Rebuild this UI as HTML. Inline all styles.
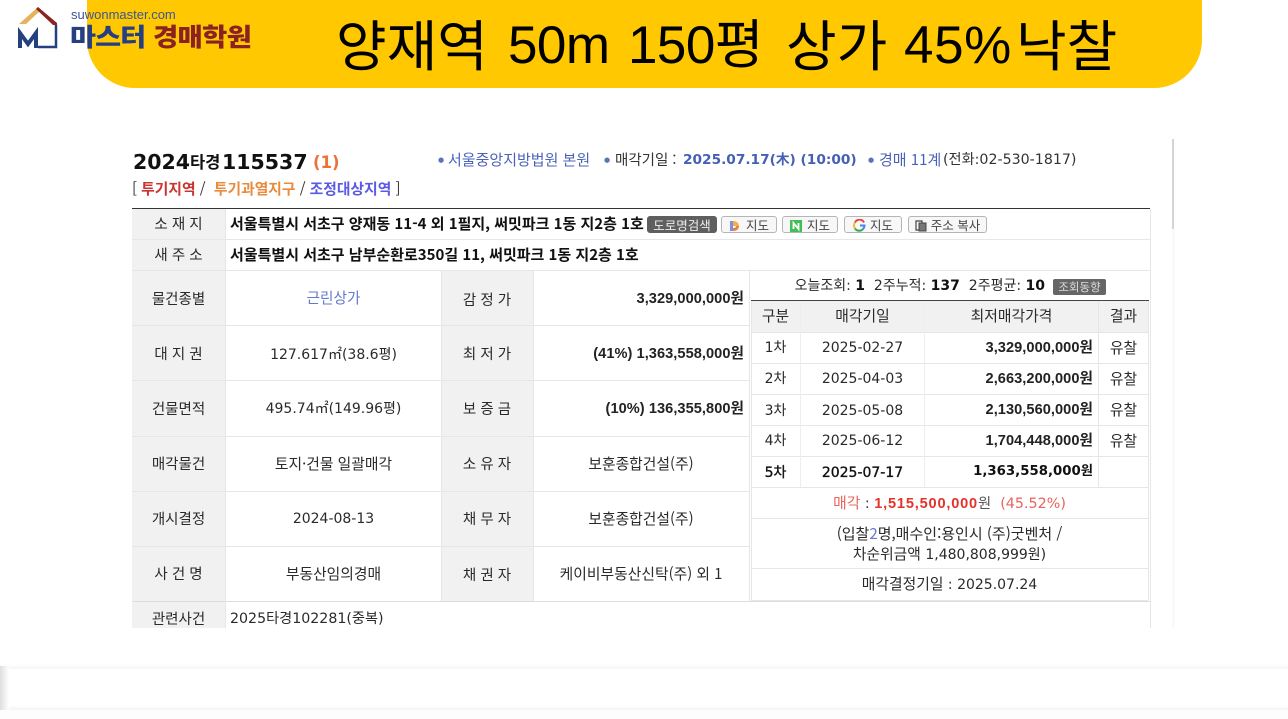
<!DOCTYPE html>
<html lang="ko"><head><meta charset="utf-8"><title>양재역 50m 150평 상가 45%낙찰</title>
<style>
html,body{margin:0;padding:0;background:#fff;width:1288px;height:719px;overflow:hidden}
body{position:relative;font-family:"DejaVu Sans","Noto Sans CJK KR",sans-serif;color:#222}
.a{position:absolute;white-space:nowrap}
.ti{position:absolute;white-space:nowrap;top:13px;font:53px/66px 'Liberation Sans','Noto Sans CJK KR',sans-serif;letter-spacing:-.55px;color:#000}
.tk{font-size:55px;letter-spacing:0}
.l{position:absolute;background:#e6e6e6}
.g{position:absolute;background:#f1f1f1}
.t{position:absolute;white-space:nowrap;font-size:14px;line-height:18px;text-align:center;color:#2a2a2a}
.k{font-family:"Noto Sans CJK KR",sans-serif;font-size:14.8px}
.h{font-family:"Noto Sans CJK KR",sans-serif;font-size:14.5px}
.r{text-align:right}
b{font-weight:700;color:#111}
.p{font:700 14.6px/18px "Liberation Sans","Noto Sans CJK KR",sans-serif;letter-spacing:.05px;color:#222}
.s{-webkit-text-stroke:.35px #111;color:#111}
.btn{position:absolute;top:216px;height:15px;border:1px solid #b5b5b5;border-radius:3px;background:#f7f7f7;box-sizing:content-box;font:12.5px/15px "Noto Sans CJK KR",sans-serif;color:#444;text-align:center;white-space:nowrap}
</style></head><body>
<div class="a" style="left:87px;top:-40px;width:1115px;height:128px;background:#ffc800;border-radius:0 0 48px 48px"></div>
<div class="ti tk" style="left:336px;top:14px">양재역</div>
<div class="ti" style="left:508px">50m</div>
<div class="ti" style="left:628px">150평</div>
<div class="ti tk" style="left:786px;top:14px">상가</div>
<div class="ti" style="left:904px;letter-spacing:.6px">45%</div>
<div class="ti tk" style="left:1016px;top:14px">낙찰</div>

<svg class="a" style="left:17px;top:6px" width="42" height="44" viewBox="0 0 42 44">
<path d="M2 18 21 1 24 4 9 18z" fill="#e8b15c"/><path d="M21 1 40 17V19H36L19 3z" fill="#8b2420"/>
<path d="M3 42V27L11 38 19 27V42" stroke="#24407f" stroke-width="4" fill="none"/><path d="M21 41H39V19" stroke="#24407f" stroke-width="2.500" fill="none"/>
</svg>
<div class="a" style="left:71px;top:7px;font:13px/16px 'Liberation Sans',sans-serif;color:#3c5596">suwonmaster.com</div>
<div class="a" style="left:70px;top:20px;font:800 25px/32px 'Noto Sans CJK KR',sans-serif;letter-spacing:-.8px;color:#253f82;transform:scaleX(1.13);transform-origin:left">마스터</div>
<div class="a" style="left:153px;top:20px;font:800 25px/32px 'Noto Sans CJK KR',sans-serif;letter-spacing:-.7px;color:#8a2222;transform:scaleX(1.1);transform-origin:left">경매학원</div>

<div style="position:absolute;left:0;top:0;width:1288px;height:719px;filter:blur(.25px)">
<div class="a" style="left:133px;top:150px;font:700 20.500px/25px 'DejaVu Sans','Noto Sans CJK KR',sans-serif;color:#111"><span style="position:absolute;left:0">2024</span><span style="position:absolute;left:57px;font-size:16.500px">타경</span><span style="position:absolute;left:89px">115537</span><span style="position:absolute;left:180px;font-size:16.500px;color:#e8743a">(1)</span></div>
<div class="a k" style="left:132px;top:179px;color:#333;line-height:20px">[ <b style="color:#c9342f">투기지역</b> / &nbsp;<b style="color:#e98a3c">투기과열지구</b> / <b style="color:#5a5ae6">조정대상지역</b> ]</div>
<div class="a" style="left:438px;top:150px;font-size:7px;line-height:20px;color:#5b74b8">●</div>
<div class="a k" style="left:448px;top:150px;line-height:20px;color:#4a63b8;font-size:15px">서울중앙지방법원 본원</div>
<div class="a" style="left:604px;top:150px;font-size:7px;line-height:20px;color:#5b74b8">●</div>
<div class="a k" style="left:615px;top:150px;line-height:20px;color:#333;font-size:14.500px">매각기일 :</div>
<div class="a" style="left:683px;top:150px;font:700 13.700px/20px 'DejaVu Sans','Noto Sans CJK KR',sans-serif;color:#4560b5">2025.07.17(木) (10:00)</div>
<div class="a" style="left:868px;top:150px;font-size:7px;line-height:20px;color:#5b74b8">●</div>
<div class="a k" style="left:879px;top:150px;line-height:20px;color:#4a63b8;font-size:15px">경매 11계</div>
<div class="a" style="left:943px;top:150px;font:14.200px/20px 'DejaVu Sans','Noto Sans CJK KR',sans-serif;color:#333">(전화:02-530-1817)</div>

<!-- backgrounds -->
<div class="g" style="left:132px;top:209px;width:93px;height:419px"></div>
<div class="g" style="left:441px;top:271px;width:92px;height:330px"></div>
<div class="g" style="left:751px;top:301px;width:397px;height:31px"></div>

<!-- main lines -->
<div class="l" style="left:132px;top:208px;width:1018px;height:1px;background:#333"></div>
<div class="l" style="left:132px;top:239px;width:1018px;height:1px"></div>
<div class="l" style="left:132px;top:270px;width:1018px;height:1px"></div>
<div class="l" style="left:132px;top:325px;width:617px;height:1px"></div>
<div class="l" style="left:132px;top:380px;width:617px;height:1px"></div>
<div class="l" style="left:132px;top:436px;width:617px;height:1px"></div>
<div class="l" style="left:132px;top:491px;width:617px;height:1px"></div>
<div class="l" style="left:132px;top:546px;width:617px;height:1px"></div>
<div class="l" style="left:132px;top:601px;width:1018px;height:1px;background:#ddd"></div>
<div class="l" style="left:225px;top:209px;width:1px;height:419px"></div>
<div class="l" style="left:441px;top:271px;width:1px;height:330px"></div>
<div class="l" style="left:533px;top:271px;width:1px;height:330px"></div>
<div class="l" style="left:749px;top:271px;width:1px;height:330px"></div>
<div class="l" style="left:1150px;top:209px;width:1px;height:419px"></div>

<!-- right table lines -->
<div class="l" style="left:751px;top:300px;width:398px;height:1px;background:#444"></div>
<div class="l" style="left:751px;top:332px;width:397px;height:1px"></div>
<div class="l" style="left:751px;top:363px;width:397px;height:1px"></div>
<div class="l" style="left:751px;top:394px;width:397px;height:1px"></div>
<div class="l" style="left:751px;top:425px;width:397px;height:1px"></div>
<div class="l" style="left:751px;top:456px;width:397px;height:1px"></div>
<div class="l" style="left:751px;top:487px;width:397px;height:1px"></div>
<div class="l" style="left:751px;top:518px;width:397px;height:1px"></div>
<div class="l" style="left:751px;top:568px;width:397px;height:1px"></div>
<div class="l" style="left:751px;top:600px;width:397px;height:1px"></div>
<div class="l" style="left:751px;top:301px;width:1px;height:299px"></div>
<div class="l" style="left:1148px;top:301px;width:1px;height:299px"></div>
<div class="l" style="left:800px;top:301px;width:1px;height:186px;background:#eee"></div>
<div class="l" style="left:924px;top:301px;width:1px;height:186px;background:#eee"></div>
<div class="l" style="left:1098px;top:301px;width:1px;height:186px"></div>

<!-- left labels -->
<div class="t h" style="left:132px;top:215px;width:93px">소 재 지</div>
<div class="t h" style="left:132px;top:246px;width:93px">새 주 소</div>
<div class="t h" style="left:132px;top:290px;width:93px">물건종별</div>
<div class="t h" style="left:132px;top:345px;width:93px">대 지 권</div>
<div class="t h" style="left:132px;top:400px;width:93px">건물면적</div>
<div class="t h" style="left:132px;top:455px;width:93px">매각물건</div>
<div class="t h" style="left:132px;top:510px;width:93px">개시결정</div>
<div class="t h" style="left:132px;top:565px;width:93px">사 건 명</div>
<div class="t h" style="left:132px;top:610px;width:93px">관련사건</div>

<div class="t h" style="left:441px;top:291px;width:92px">감 정 가</div>
<div class="t h" style="left:441px;top:345px;width:92px">최 저 가</div>
<div class="t h" style="left:441px;top:400px;width:92px">보 증 금</div>
<div class="t h" style="left:441px;top:455px;width:92px">소 유 자</div>
<div class="t h" style="left:441px;top:510px;width:92px">채 무 자</div>
<div class="t h" style="left:441px;top:566px;width:92px">채 권 자</div>

<!-- address -->
<div class="a" style="left:230px;top:215px;font:700 15px/18px 'Noto Sans CJK KR',sans-serif;color:#111">서울특별시 서초구 양재동 11-4 외 1필지, 써밋파크 1동 지2층 1호</div>
<div class="a" style="left:230px;top:246px;font:700 15px/18px 'Noto Sans CJK KR',sans-serif;color:#111">서울특별시 서초구 남부순환로350길 11, 써밋파크 1동 지2층 1호</div>

<div class="btn" style="left:647px;width:68px;background:#5f5f5f;border-color:#5f5f5f;color:#eee">도로명검색</div>
<div class="btn" style="left:721px;width:54px"><svg width="12" height="12" viewBox="0 0 12 12" style="vertical-align:-2px;margin-right:5px"><path d="M1 1h4a5 5 0 0 1 5 5H4V4H1z" fill="#f2b33d"/><path d="M1 1h3v10H1z" fill="#7f8fe8"/><path d="M4 8h1a2 2 0 0 0 2-2h3a5 5 0 0 1-5 5H4z" fill="#ef7b45"/></svg>지도</div>
<div class="btn" style="left:782px;width:54px"><svg width="12" height="12" viewBox="0 0 12 12" style="vertical-align:-2px;margin-right:5px"><rect width="12" height="12" fill="#3fbf55"/><path d="M3.500 9V3L8.500 9V3" stroke="#fff" stroke-width="1.800" fill="none"/></svg>지도</div>
<div class="btn" style="left:844px;width:56px"><svg width="13" height="13" viewBox="0 0 13 13" style="vertical-align:-2px;margin-right:4px"><path d="M11 3.500A5 5 0 0 0 2 3.500" stroke="#e9463a" stroke-width="2" fill="none"/><path d="M2 3.500a5 5 0 0 0 0 6" stroke="#f4bb2c" stroke-width="2" fill="none"/><path d="M2 9.500a5 5 0 0 0 8 .5" stroke="#35a853" stroke-width="2" fill="none"/><path d="M7 6.500h4.500a5 5 0 0 1-1.500 3.500" stroke="#4385f4" stroke-width="2" fill="none"/></svg>지도</div>
<div class="btn" style="left:908px;width:77px"><svg width="12" height="12" viewBox="0 0 12 12" style="vertical-align:-2px;margin-right:4px"><path d="M1 1h6v9H1z" fill="none" stroke="#444" stroke-width="1.200"/><path d="M4 3h7v8H4z" fill="#777" stroke="#444"/></svg>주소 복사</div>

<!-- values -->
<div class="t k" style="left:226px;top:289px;width:215px;color:#6478cc;font-size:14.700px">근린상가</div>
<div class="t" style="left:226px;top:346px;width:215px">127.617㎡(38.6평)</div>
<div class="t" style="left:226px;top:400px;width:215px">495.74㎡(149.96평)</div>
<div class="t k" style="left:226px;top:455px;width:215px">토지·건물 일괄매각</div>
<div class="t" style="left:226px;top:510px;width:215px">2024-08-13</div>
<div class="t k" style="left:226px;top:565px;width:215px">부동산임의경매</div>
<div class="t" style="left:230px;top:610px;text-align:left;font-size:14.200px">2025타경102281(중복)</div>

<div class="t r p" style="left:534px;top:290px;width:210px">3,329,000,000원</div>
<div class="t r p" style="left:534px;top:345px;width:210px">(41%) 1,363,558,000원</div>
<div class="t r p" style="left:534px;top:400px;width:210px">(10%) 136,355,800원</div>
<div class="t k" style="left:533px;top:455px;width:216px">보훈종합건설(주)</div>
<div class="t k" style="left:533px;top:510px;width:216px">보훈종합건설(주)</div>
<div class="t k" style="left:533px;top:565px;width:216px">케이비부동산신탁(주) 외 1</div>

<!-- right -->
<div class="t" style="left:751px;top:277px;width:294px;text-align:right">오늘조회: <b>1</b> &nbsp;2주누적: <b>137</b> &nbsp;2주평균: <b>10</b></div>
<div class="a" style="left:1053px;top:279px;width:53px;height:16px;background:#666;border-radius:2px;color:#ddd;font:11.500px/16px 'Noto Sans CJK KR',sans-serif;text-align:center">조회동향</div>

<div class="t k" style="left:751px;top:307px;width:49px">구분</div>
<div class="t k" style="left:801px;top:307px;width:123px">매각기일</div>
<div class="t k" style="left:925px;top:307px;width:173px">최저매각가격</div>
<div class="t k" style="left:1099px;top:307px;width:49px">결과</div>

<div class="t" style="left:751px;top:339px;width:49px">1차</div><div class="t" style="left:801px;top:339px;width:123px">2025-02-27</div><div class="t r p" style="left:925px;top:339px;width:168px">3,329,000,000원</div><div class="t k" style="left:1099px;top:339px;width:49px">유찰</div>
<div class="t" style="left:751px;top:370px;width:49px">2차</div><div class="t" style="left:801px;top:370px;width:123px">2025-04-03</div><div class="t r p" style="left:925px;top:370px;width:168px">2,663,200,000원</div><div class="t k" style="left:1099px;top:370px;width:49px">유찰</div>
<div class="t" style="left:751px;top:402px;width:49px">3차</div><div class="t" style="left:801px;top:402px;width:123px">2025-05-08</div><div class="t r p" style="left:925px;top:401px;width:168px">2,130,560,000원</div><div class="t k" style="left:1099px;top:401px;width:49px">유찰</div>
<div class="t" style="left:751px;top:432px;width:49px">4차</div><div class="t" style="left:801px;top:432px;width:123px">2025-06-12</div><div class="t r p" style="left:925px;top:432px;width:168px">1,704,448,000원</div><div class="t k" style="left:1099px;top:432px;width:49px">유찰</div>
<div class="t s" style="left:751px;top:464px;width:49px">5차</div><div class="t s" style="left:801px;top:464px;width:123px">2025-07-17</div><div class="t r" style="left:925px;top:463px;width:168px;font-size:13.300px"><b>1,363,558,000원</b></div>

<div class="t" style="left:751px;top:494px;width:397px;color:#e8645c;font-size:14.300px"><span class="k">매각</span> <span style="color:#333">:</span> <b style="color:#e3342c;font:700 14.600px 'Liberation Sans',sans-serif;letter-spacing:.8px">1,515,500,000</b><span style="color:#555">원</span> &nbsp;(45.52%)</div>
<div class="t" style="left:751px;top:525px;width:397px"><span class="k" style="font-size:15px">(입찰<span style="color:#6478cc">2</span>명,매수인:용인시 (주)굿벤처 /</span></div>
<div class="t" style="left:751px;top:545px;width:397px"><span class="k">차순위금액</span> 1,480,808,999원)</div>
<div class="t" style="left:751px;top:575px;width:397px"><span class="k">매각결정기일</span> : 2025.07.24</div>
</div>

<!-- scroll line -->
<div class="l" style="left:1172px;top:139px;width:2px;height:90px;background:#d4d4d4"></div>
<div class="l" style="left:1172px;top:229px;width:3px;height:399px;background:#fafafa"></div>
<!-- clip -->
<div class="a" style="left:0;top:628px;width:1288px;height:36px;background:#fff"></div>
<!-- bottom bar -->
<div class="a" style="left:0;top:664px;width:1288px;height:5px;background:linear-gradient(#fff,#f6f6f6)"></div>
<div class="a" style="left:0;top:669px;width:1288px;height:36px;background:#fff"></div>
<div class="a" style="left:0;top:705px;width:1288px;height:5px;background:linear-gradient(#fff,#f4f4f4)"></div>
<div class="a" style="left:0;top:710px;width:1288px;height:9px;background:#fdfdfd"></div>
<div class="a" style="left:0;top:666px;width:9px;height:44px;background:linear-gradient(90deg,#dedede,#fff)"></div>
</body></html>
